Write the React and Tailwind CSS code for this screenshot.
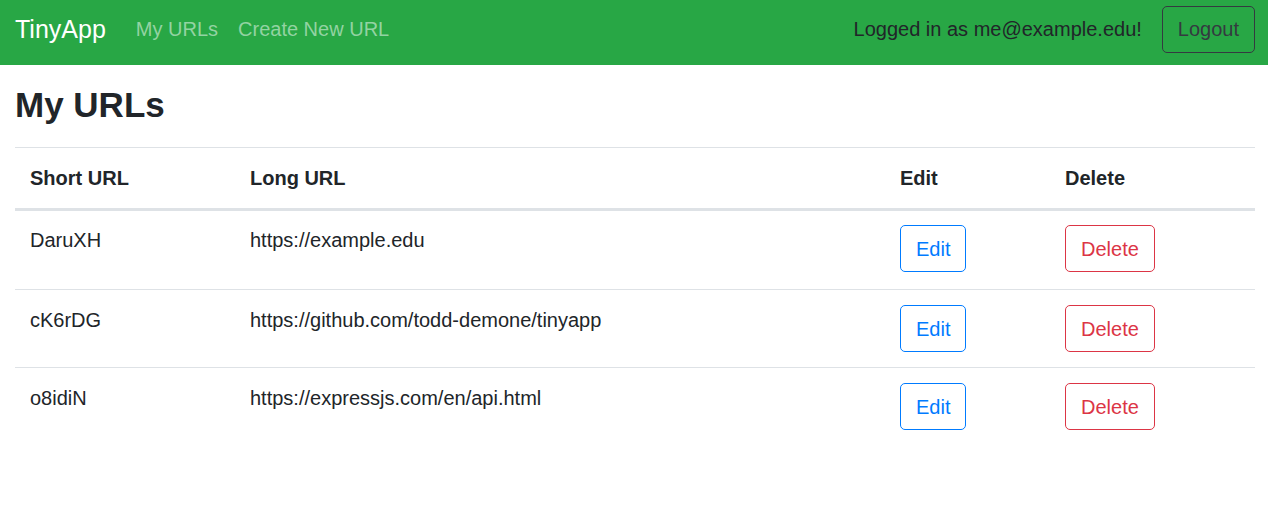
const urls = [
  { id: "DaruXH", long: "https://example.edu" },
  { id: "cK6rDG", long: "https://github.com/todd-demone/tinyapp" },
  { id: "o8idiN", long: "https://expressjs.com/en/api.html" },
];

export default function App() {
  return (
    <div className="min-h-[516px] bg-white font-['Liberation_Sans',Arial,sans-serif] text-[20px] leading-[30px] text-[#212529]">
      <nav className="flex h-[65px] items-center bg-[#28a745] pb-[7px] pl-[15px] pr-[13px]">
        <span className="mr-5 text-[25px] leading-[37px] text-white">TinyApp</span>
        <a className="px-[10px] text-[#93d3a2]" href="#">My URLs</a>
        <a className="px-[10px] text-[#93d3a2]" href="#">Create New URL</a>
        <div className="ml-auto flex items-center">
          <span className="mr-5 text-[#212529]">Logged in as me@example.edu!</span>
          <button className="h-[47px] rounded-[5px] border border-[#343a40] px-[15px] text-[#343a40]">
            Logout
          </button>
        </div>
      </nav>

      <main className="pl-[15px] pr-[13px]">
        <h3 className="mt-[19px] mb-[21px] text-[35px] leading-[42px] font-bold">My URLs</h3>
        <table className="w-full table-fixed border-separate border-spacing-0">
          <thead>
            <tr className="text-left">
              <th className="w-[220px] border-t border-b-[3px] border-[#dee2e6] p-[15px] font-bold">Short URL</th>
              <th className="w-[650px] border-t border-b-[3px] border-[#dee2e6] p-[15px] font-bold">Long URL</th>
              <th className="w-[165px] border-t border-b-[3px] border-[#dee2e6] p-[15px] font-bold">Edit</th>
              <th className="border-t border-b-[3px] border-[#dee2e6] p-[15px] font-bold">Delete</th>
            </tr>
          </thead>
          <tbody>
            {urls.map((u, i) => {
              const cell =
                i === 0
                  ? "px-[15px] pt-[14px] pb-[17px] align-top"
                  : "border-t border-[#dee2e6] p-[15px] align-top";
              return (
                <tr key={u.id}>
                  <td className={cell}>{u.id}</td>
                  <td className={cell}>{u.long}</td>
                  <td className={cell}>
                    <button className="h-[47px] rounded-[5px] border border-[#007bff] px-[15px] text-[#007bff]">
                      Edit
                    </button>
                  </td>
                  <td className={cell}>
                    <button className="h-[47px] rounded-[5px] border border-[#dc3545] px-[15px] text-[#dc3545]">
                      Delete
                    </button>
                  </td>
                </tr>
              );
            })}
          </tbody>
        </table>
      </main>
    </div>
  );
}
